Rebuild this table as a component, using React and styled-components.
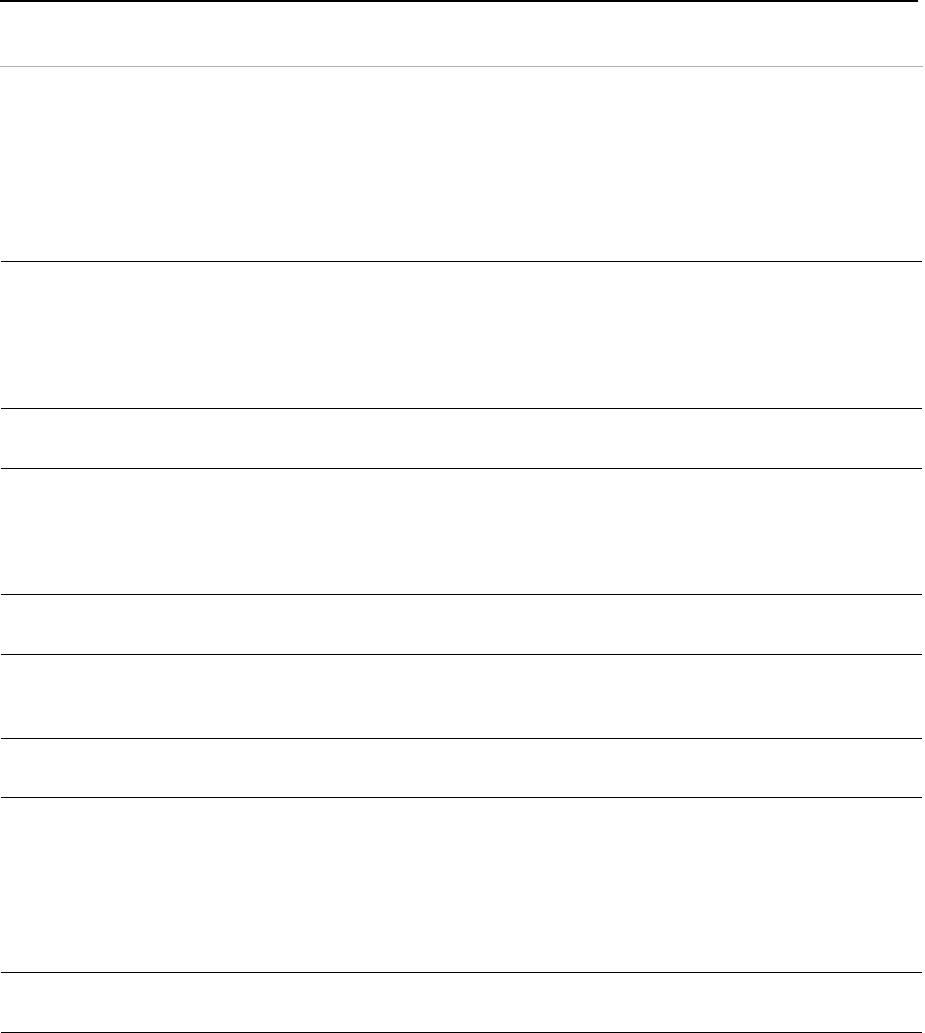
import React from "react";
import styled, { createGlobalStyle } from "styled-components";

const Global = createGlobalStyle`
  html, body { margin: 0; padding: 0; background: #fff; }
  body { font-family: "Liberation Sans", Arial, sans-serif; }
`;

const Page = styled.div`
  width: 925px;
  height: 1033px;
  overflow: hidden;
  display: flex;
  flex-direction: column;
`;

const TopBar = styled.header`
  width: 918px;
  border-top: 2px solid #000;
  height: 66px;
  box-sizing: border-box;
`;

const HeaderRule = styled.div`
  width: 923px;
  height: 1px;
  background: #b3b3b3;
`;

const List = styled.div`
  display: flex;
  flex-direction: column;
  padding-left: 1px;
  width: 921px;
`;

const Row = styled.section`
  height: ${(p) => p.$h}px;
  box-sizing: border-box;
  border-bottom: 1px solid #000;
`;

const rows = [195, 147, 60, 126, 60, 84, 59, 175, 60];

export default function App() {
  return (
    <>
      <Global />
      <Page>
        <TopBar />
        <HeaderRule />
        <List>
          {rows.map((h, i) => (
            <Row key={i} $h={h} />
          ))}
        </List>
      </Page>
    </>
  );
}
